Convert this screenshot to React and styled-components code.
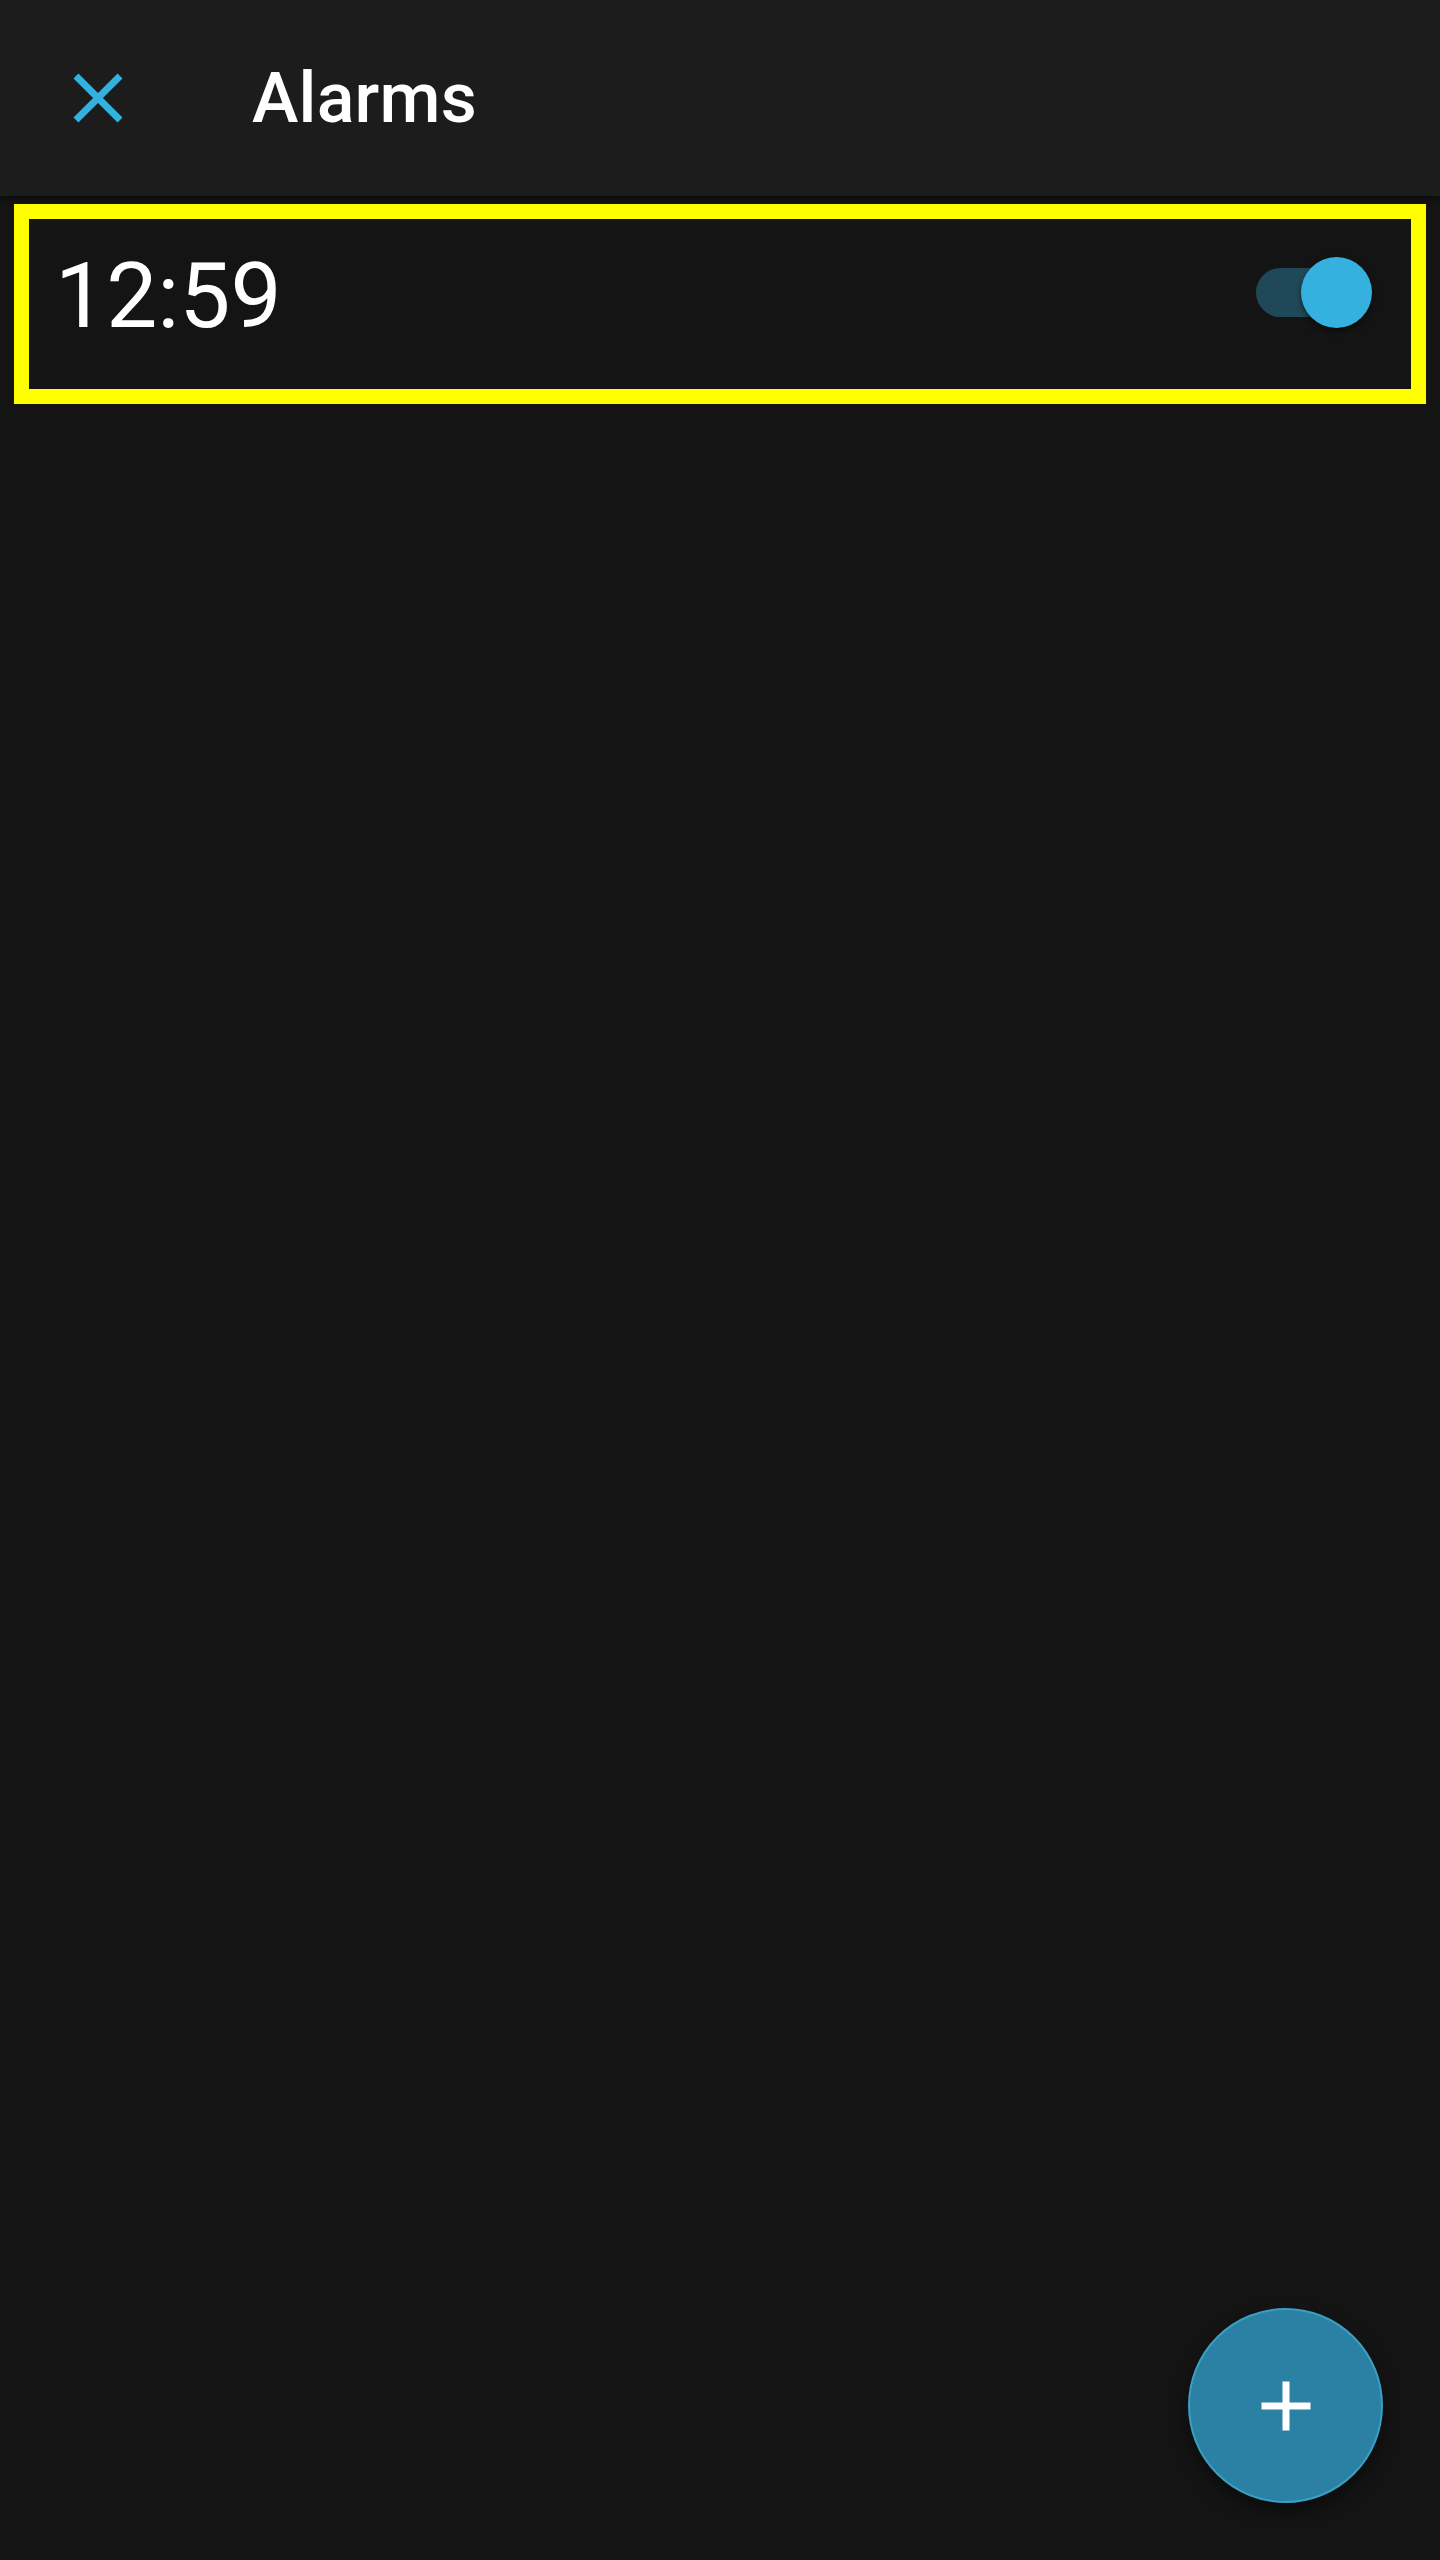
import React, { useState } from "react";
import styled, { createGlobalStyle } from "styled-components";

const GlobalStyle = createGlobalStyle`
  *, *::before, *::after {
    box-sizing: border-box;
  }
  html, body {
    margin: 0;
    padding: 0;
    background: #141414;
    font-family: Roboto, "Liberation Sans", sans-serif;
  }
`;

const CloseIcon = () => (
  <svg width="84" height="84" viewBox="0 0 24 24" fill="#33b2e2">
    <path d="M19 6.41L17.59 5 12 10.59 6.41 5 5 6.41 10.59 12 5 17.59 6.41 19 12 13.41 17.59 19 19 17.59 13.41 12z" />
  </svg>
);

const AddIcon = () => (
  <svg width="84" height="84" viewBox="0 0 24 24" fill="#ffffff">
    <path d="M19 13h-6v6h-2v-6H5v-2h6V5h2v6h6v2z" />
  </svg>
);

const App = () => {
  const [alarms, setAlarms] = useState([{ id: 1, time: "12:59", on: true }]);

  const toggle = (id) =>
    setAlarms(alarms.map((a) => (a.id === id ? { ...a, on: !a.on } : a)));

  return (
    <>
      <GlobalStyle />
      <Page>
        <Header>
          <IconButton>
            <CloseIcon />
          </IconButton>
          <Title>Alarms</Title>
        </Header>
        <List>
          {alarms.map(({ id, time, on }) => (
            <Row key={id}>
              <Time>{time}</Time>
              <Switch onClick={() => toggle(id)}>
                <Track on={on ? 1 : 0} />
                <Thumb on={on ? 1 : 0} />
              </Switch>
            </Row>
          ))}
        </List>
        <Fab>
          <AddIcon />
        </Fab>
      </Page>
    </>
  );
};

const Page = styled.div`
  position: relative;
  height: 2560px;
  overflow: hidden;
  background: #141414;
`;

const Header = styled.header`
  height: 196px;
  display: flex;
  align-items: center;
  padding-left: 56px;
  background: #1c1c1c;
  box-shadow: 0 3px 6px rgba(0, 0, 0, 0.45);
  position: relative;
  z-index: 1;
`;

const IconButton = styled.div`
  width: 84px;
  height: 84px;
  display: flex;
  align-items: center;
  justify-content: center;
`;

const Title = styled.h1`
  margin: 0 0 0 112px;
  font-size: 70px;
  font-weight: 500;
  color: #ffffff;
  letter-spacing: 0.2px;
`;

const List = styled.div`
  padding: 8px 14px 0;
`;

const Row = styled.div`
  height: 200px;
  border: 15px solid #ffff00;
  display: flex;
  align-items: center;
  justify-content: space-between;
  padding: 0 39px 16px 26px;
`;

const Time = styled.div`
  font-size: 91px;
  font-weight: 400;
  color: #ffffff;
  line-height: 1.17;
`;

const Switch = styled.div`
  position: relative;
  width: 116px;
  height: 71px;
  margin-bottom: 8px;
  cursor: pointer;
`;

const Track = styled.div`
  position: absolute;
  left: 0;
  top: 11px;
  width: 106px;
  height: 49px;
  border-radius: 25px;
  background: ${(p) => (p.on ? "#1f4858" : "#555555")};
`;

const Thumb = styled.div`
  position: absolute;
  top: 0;
  ${(p) => (p.on ? "right: 0;" : "left: -10px;")}
  width: 71px;
  height: 71px;
  border-radius: 50%;
  background: ${(p) => (p.on ? "#35b1df" : "#bdbdbd")};
  box-shadow: 0 3px 5px rgba(0, 0, 0, 0.5);
`;

const Fab = styled.button`
  position: absolute;
  right: 57px;
  bottom: 57px;
  width: 195px;
  height: 195px;
  border-radius: 50%;
  border: 2px solid #3a9fc5;
  background: #2a81a3;
  display: flex;
  align-items: center;
  justify-content: center;
  padding: 0;
  box-shadow: 0 8px 16px rgba(0, 0, 0, 0.45);
`;

export default App;
